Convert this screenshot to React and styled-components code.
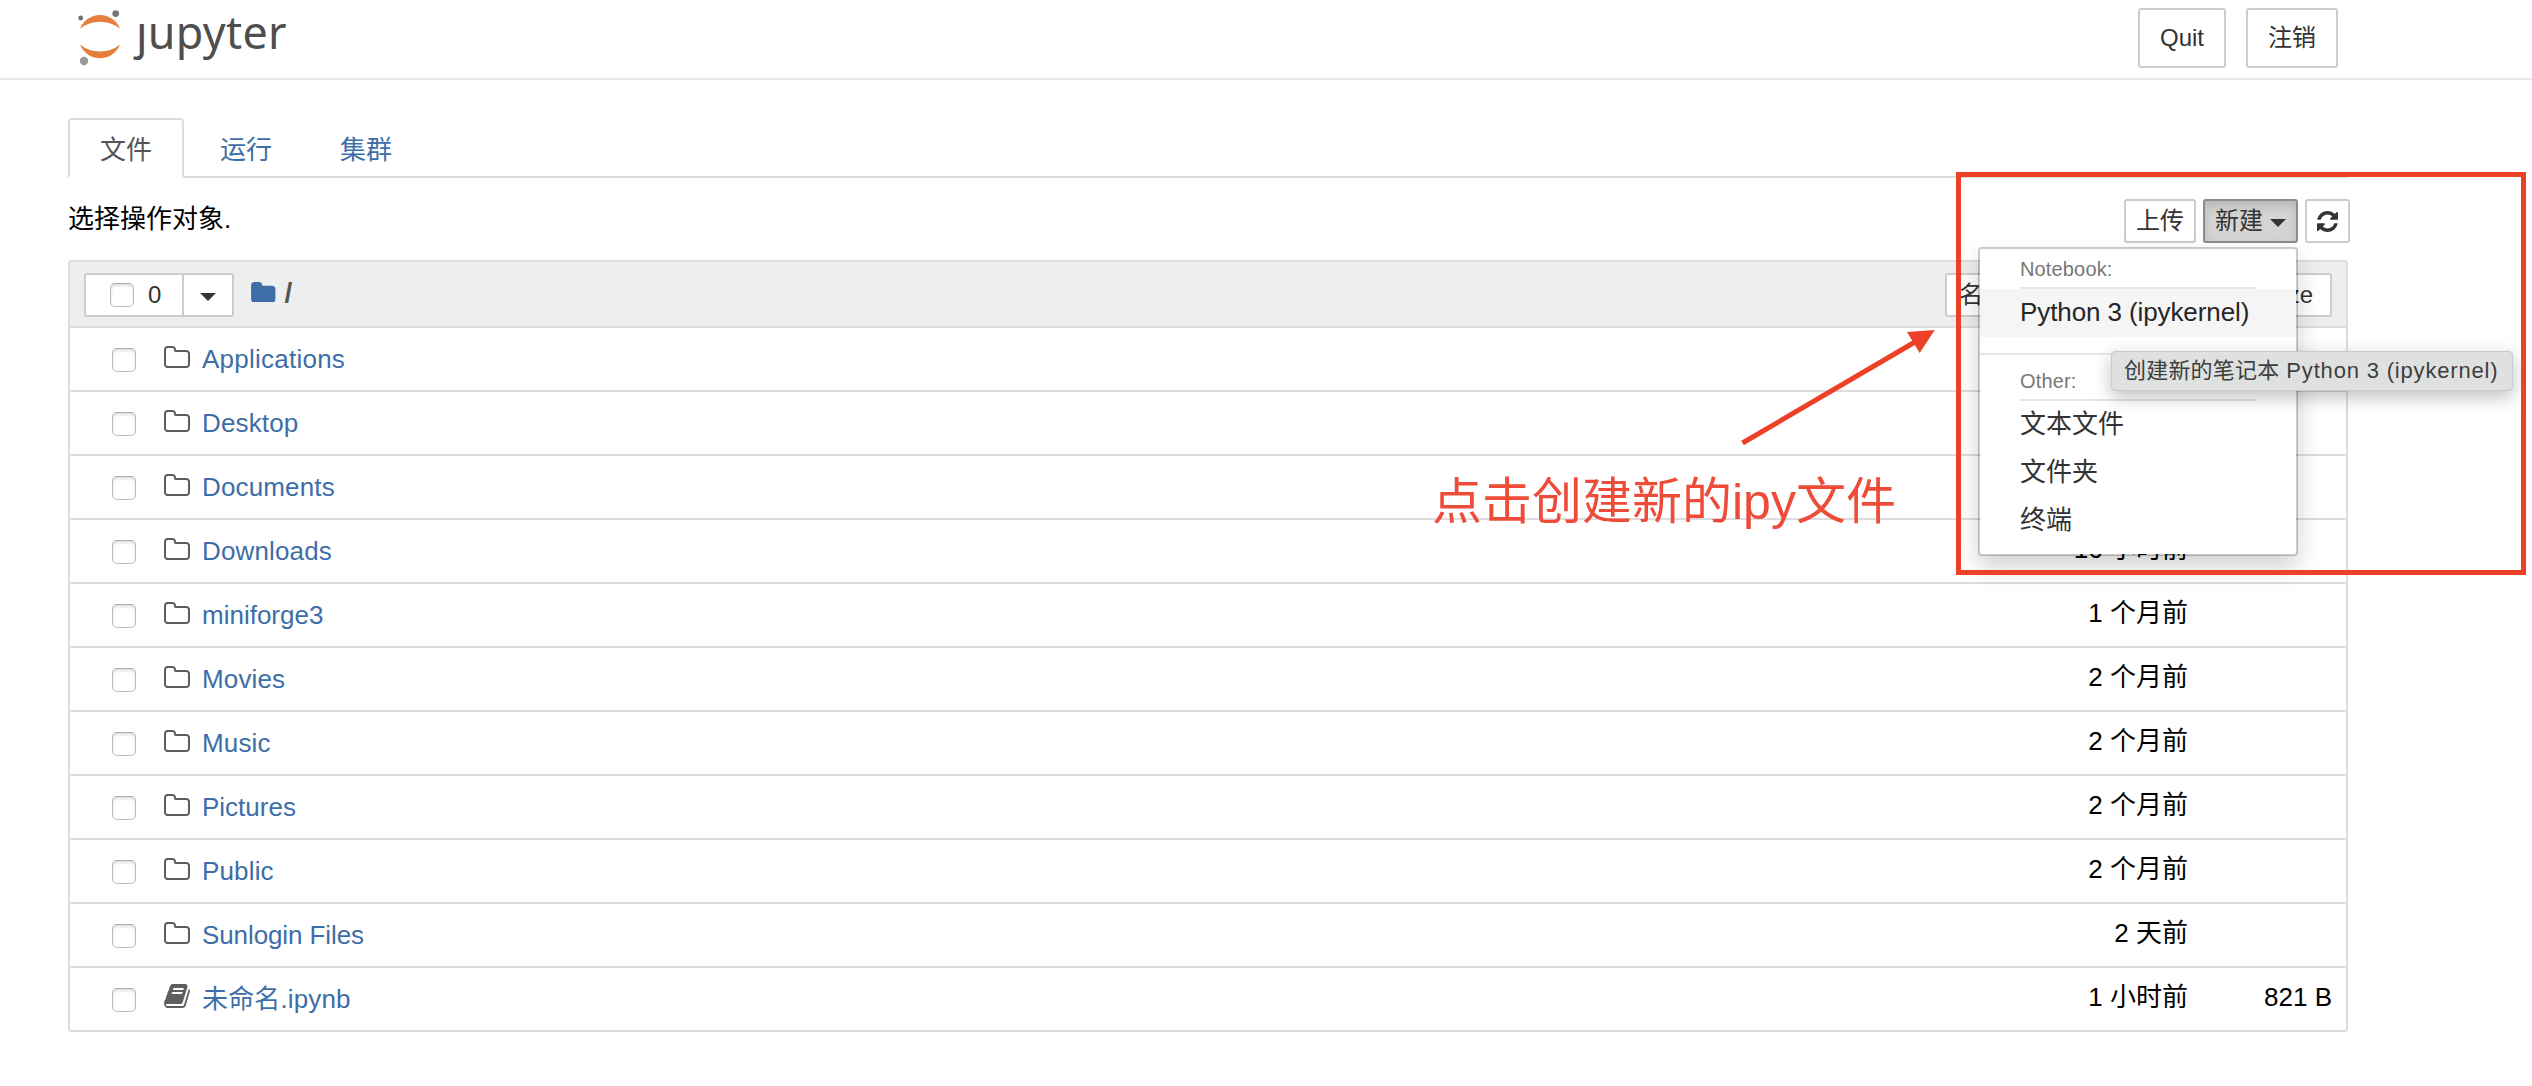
import React from "react";
import styled, { createGlobalStyle } from "styled-components";

const sans = '"Liberation Sans", Arial, "Noto Sans CJK SC", sans-serif';

const GlobalStyle = createGlobalStyle`
  *, *::before, *::after { box-sizing: border-box; }
  body {
    margin: 0;
    background: #fff;
    color: #000;
    font-family: ${sans};
    font-size: 26px;
    line-height: 36px;
  }
  button { font-family: inherit; margin: 0; }
`;

const Page = styled.div`
  position: relative;
  height: 1086px;
  overflow: hidden;
`;

const Header = styled.header`
  height: 80px;
  border-bottom: 2px solid #e7e7e7;
  padding: 8px 194px 0 76px;
  display: flex;
  justify-content: space-between;
  align-items: flex-start;
`;

const Brand = styled.a`
  display: flex;
  align-items: flex-start;
  color: #4e4e4e;
`;

const LogoMark = styled.svg`
  width: 48px;
  height: 60px;
  display: block;
`;

const Wordmark = styled.span`
  display: flex;
  margin: -6px 0 0 12px;
  font-family: "Noto Sans", sans-serif;
  font-size: 44.8px;
  line-height: 60px;
  letter-spacing: 0.3px;
`;

const Stem = styled.span`
  clip-path: inset(22px -4px -10px -20px);
`;

const HeaderActions = styled.div`
  display: flex;
  gap: 20px;
`;

const Button = styled.button`
  display: flex;
  align-items: center;
  justify-content: center;
  height: ${(p) => (p.$large ? 60 : 44)}px;
  padding: 0 ${(p) => p.$pad ?? 10}px;
  border: 2px solid ${(p) => (p.$active ? "#8c8c8c" : "#ccc")};
  border-radius: 3px;
  background: ${(p) => (p.$active ? "#d4d4d4" : "#fff")};
  box-shadow: ${(p) => (p.$active ? "inset 0 6px 10px rgba(0,0,0,.125)" : "none")};
  color: #333;
  font-size: 24px;
  line-height: 36px;
  white-space: nowrap;
`;

const Caret = styled.span`
  width: 16px;
  height: 8px;
  margin: ${(p) => p.$margin ?? "0"};
  background: #333;
  clip-path: polygon(0 0, 100% 0, 50% 100%);
`;

const Container = styled.main`
  width: 2280px;
  margin: 38px 0 0 68px;
`;

const Tabs = styled.nav`
  display: flex;
  gap: 4px;
  height: 60px;
  border-bottom: 2px solid #ddd;
`;

const Tab = styled.a`
  height: 60px;
  padding: 12px 30px 0;
  border: 2px solid ${(p) => (p.$active ? "#ddd" : "transparent")};
  border-bottom-color: ${(p) => (p.$active ? "#fff" : "transparent")};
  border-radius: 4px 4px 0 0;
  color: ${(p) => (p.$active ? "#555" : "#3d6ea8")};
`;

const Toolbar = styled.div`
  display: flex;
  justify-content: space-between;
  height: 82px;
  padding-top: 21px;
`;

const Hint = styled.div`
  line-height: 40px;
`;

const ToolbarActions = styled.div`
  display: flex;
  gap: 7px;
  margin-right: -2px;
`;

const MenuAnchor = styled.div`
  position: relative;
`;

const Menu = styled.div`
  position: absolute;
  top: 48px;
  right: 0;
  z-index: 5;
  width: 320px;
  height: 309px;
  padding-top: 8px;
  background: #fff;
  background-clip: padding-box;
  border: 2px solid rgba(0, 0, 0, 0.2);
  border-radius: 4px;
  box-shadow: 0 12px 24px rgba(0, 0, 0, 0.175);
`;

const MenuHeading = styled.div`
  height: 32px;
  margin: 0 40px;
  border-bottom: 2px solid #e5e5e5;
  color: #777;
  font-size: 20px;
  line-height: 25px;
  letter-spacing: 0.15px;
`;

const MenuItem = styled.div`
  height: 48px;
  padding-left: 40px;
  background: ${(p) => (p.$hover ? "#f5f5f5" : "transparent")};
  color: ${(p) => (p.$hover ? "#262626" : "#333")};
  letter-spacing: ${(p) => (p.$hover ? "-0.1px" : "0")};
  line-height: 46px;
`;

const MenuDivider = styled.div`
  height: 2px;
  margin: 16px 0 14px;
  background: #e5e5e5;
`;

const Tooltip = styled.div`
  position: absolute;
  z-index: 6;
  top: 152px;
  left: -92px;
  width: 402px;
  height: 40px;
  padding-left: 12px;
  background: #dfe1e0;
  border: 1px solid #c9cbca;
  border-radius: 4px;
  box-shadow: 0 6px 18px rgba(0, 0, 0, 0.25);
  color: #3d3f3e;
  font-size: 22px;
  line-height: 38px;
  letter-spacing: 0.2px;
  white-space: nowrap;
`;

const Spaced = styled.span`
  letter-spacing: 0.82px;
`;

const List = styled.section`
  border: 2px solid #ddd;
  border-radius: 4px;
  overflow: hidden;
`;

const ListHeader = styled.div`
  display: flex;
  align-items: flex-start;
  height: 64px;
  padding: 11px 14px 0;
  background: #eee;
`;

const Selector = styled.div`
  display: flex;
  height: 44px;
  width: 150px;
  border: 2px solid #ccc;
  border-radius: 3px;
  background: #fff;
  color: #333;
  font-size: 24px;
`;

const SelectAll = styled.div`
  display: flex;
  align-items: center;
  gap: 14px;
  width: 98px;
  padding-left: 24px;
  border-right: 2px solid #ccc;
`;

const SelectMenu = styled.div`
  flex: 1;
  display: flex;
  align-items: center;
  justify-content: center;
  padding-top: 4px;
`;

const Checkbox = styled.span`
  flex: none;
  width: 24px;
  height: 24px;
  margin-top: ${(p) => p.$top ?? 0}px;
  border: 1px solid #bcbcbc;
  border-top-color: #adadad;
  border-radius: 5px;
  background: #fff;
  box-shadow: inset 0 2px 3px rgba(0, 0, 0, 0.13);
`;

const Crumbs = styled.div`
  display: flex;
  margin-left: 17px;
  padding-top: 1px;
  color: #555;
  gap: 9px;
`;

const CrumbSlash = styled.span`
  font-size: 28px;
  font-weight: bold;
  line-height: 38px;
`;

const SortButtons = styled.div`
  display: flex;
  flex: 1;
  justify-content: flex-end;
`;

const SortGroup = styled.div`
  display: flex;
  justify-content: space-between;
  width: 387px;
`;

const Row = styled.div`
  display: flex;
  height: 64px;
  padding: 0 14px 0 42px;
  border-top: 2px solid #ddd;
`;

const IconSlot = styled.span`
  width: 26px;
  margin: ${(p) => (p.$notebook ? 16 : 18)}px 12px 0 28px;
`;

const Icon = styled.svg`
  display: block;
  width: ${(p) => p.$w}px;
  height: ${(p) => p.$h}px;
  margin-top: ${(p) => p.$top ?? 0}px;
  fill: ${(p) => p.$color};
`;

const FileName = styled.a`
  flex: 1;
  padding-top: 13px;
  color: #3d6ea8;
  letter-spacing: ${(p) => p.$tracking ?? 0.15}px;
`;

const Modified = styled.span`
  padding-top: 11px;
  text-align: right;
`;

const Size = styled.span`
  width: 144px;
  padding-top: 11px;
  text-align: right;
`;

const HighlightFrame = styled.div`
  position: absolute;
  z-index: 8;
  left: 1956px;
  top: 172px;
  width: 570px;
  height: 403px;
  border: 5px solid #ec4126;
`;

const Arrow = styled.svg`
  position: absolute;
  z-index: 8;
  left: 1735px;
  top: 325px;
  width: 205px;
  height: 125px;
`;

const Note = styled.div`
  position: absolute;
  z-index: 8;
  left: 1432px;
  top: 467px;
  color: #ee4c38;
  font-size: 50px;
  line-height: 70px;
  white-space: nowrap;
`;

const FOLDER =
  "M1664 480v704q0 92-66 158t-158 66h-1216q-92 0-158-66t-66-158v-960q0-92 66-158t158-66h320q92 0 158 66t66 158v32h672q92 0 158 66t66 158z";
const FOLDER_OPEN =
  "M1536 1184v-704q0-40-28-68t-68-28h-704q-40 0-68-28t-28-68v-64q0-40-28-68t-68-28h-320q-40 0-68 28t-28 68v960q0 40 28 68t68 28h1216q40 0 68-28t28-68z" +
  FOLDER;
const REFRESH =
  "M1511 928q0 5-1 7-64 268-268 434.5t-478 166.5q-146 0-282.5-55t-243.5-157l-129 129q-19 19-45 19t-45-19-19-45v-448q0-26 19-45t45-19h448q26 0 45 19t19 45-19 45l-137 137q71 66 161 102t187 36q134 0 250-65t186-179q11-17 53-117 8-23 30-23h192q13 0 22.5 9.5t9.5 22.5zM1536 128v448q0 26-19 45t-45 19h-448q-26 0-45-19t-19-45 19-45l138-138q-148-137-349-137-134 0-250 65t-186 179q-11 17-53 117-8 23-30 23h-199q-13 0-22.5-9.5t-9.5-22.5v-7q65-268 270-434.5t480-166.5q146 0 284 55.5t245 156.5l130-129q19-19 45-19t45 19 19 45z";
const BOOK =
  "M1639 478q40 57 18 129l-275 906q-19 64-76.5 107.5t-122.5 43.5h-923q-77 0-148.5-53.5t-99.5-131.5q-24-67-2-127 0-4 3-27t4-37q1-8-3-21.5t-3-19.5q2-11 8-21t16.5-23.5 16.5-23.5q23-38 45-91.5t30-91.5q3-10 .5-30t-.5-28q3-11 17-28t17-23q21-36 42-92t25-90q1-9-2.5-32t.5-28q4-13 22-30.5t22-22.5q19-26 42.5-84.5t27.5-96.5q1-8-3-25.5t-2-26.5q2-8 9-18t18-23 17-21q8-12 16.5-30.5t15-35 16-36 19.5-32 26.5-23.5 36-11.5 47.5 5.5l-1 3q38-9 51-9h761q74 0 114 56t18 130l-274 906q-36 119-71.5 153.5t-128.5 34.5h-869q-27 0-38 15-11 16-1 43 24 70 144 70h923q29 0 56-15.5t35-41.5l300-987q7-22 5-57 38 15 59 43zM575 480q-4 13 2 22.5t20 9.5h608q13 0 25.5-9.5t16.5-22.5l21-64q4-13-2-22.5t-20-9.5h-608q-13 0-25.5 9.5t-16.5 22.5zM492 736q-4 13 2 22.5t20 9.5h608q13 0 25.5-9.5t16.5-22.5l21-64q4-13-2-22.5t-20-9.5h-608q-13 0-25.5 9.5t-16.5 22.5z";

const files = [
  { name: "Applications", tracking: 0.24 },
  { name: "Desktop" },
  { name: "Documents" },
  { name: "Downloads", modified: "16 小时前" },
  { name: "miniforge3", modified: "1 个月前", tracking: 0 },
  { name: "Movies", modified: "2 个月前" },
  { name: "Music", modified: "2 个月前" },
  { name: "Pictures", modified: "2 个月前", tracking: 0 },
  { name: "Public", modified: "2 个月前" },
  { name: "Sunlogin Files", modified: "2 天前", tracking: -0.1 },
  { name: "未命名.ipynb", modified: "1 小时前", size: "821 B", notebook: true },
];

function FileRow({ name, modified, size, notebook, tracking }) {
  return (
    <Row>
      <Checkbox $top={20} />
      <IconSlot $notebook={notebook}>
        {notebook ? (
          <Icon $w={26} $h={24} $color="#5e5e5e" viewBox="0 128 1664 1536">
            <path d={BOOK} />
          </Icon>
        ) : (
          <Icon $w={26} $h={22} $color="#5e5e5e" viewBox="0 0 1664 1408">
            <path fillRule="evenodd" d={FOLDER_OPEN} />
          </Icon>
        )}
      </IconSlot>
      <FileName $tracking={tracking}>{name}</FileName>
      <Modified>{modified}</Modified>
      <Size>{size}</Size>
    </Row>
  );
}

export default function App() {
  return (
    <Page>
      <GlobalStyle />
      <Header>
        <Brand>
          <LogoMark viewBox="76 8 48 60">
            <path fill="#e47f3d" d="M80 28.8A21.4 21.4 0 0 1 120 28.8A32 32 0 0 0 80 28.8Z" />
            <path fill="#e47f3d" d="M80 44.4A21.4 21.4 0 0 0 120 44.4A32 32 0 0 1 80 44.4Z" />
            <circle cx="80.7" cy="18" r="2.4" fill="#6f6f70" />
            <circle cx="115.7" cy="13.6" r="3.4" fill="#767677" />
            <circle cx="84" cy="61" r="4.2" fill="#9a9a9a" />
          </LogoMark>
          <Wordmark>
            <Stem>j</Stem>upyter
          </Wordmark>
        </Brand>
        <HeaderActions>
          <Button $large $pad={20}>Quit</Button>
          <Button $large $pad={20}>注销</Button>
        </HeaderActions>
      </Header>

      <Container>
        <Tabs>
          <Tab $active>文件</Tab>
          <Tab>运行</Tab>
          <Tab>集群</Tab>
        </Tabs>

        <Toolbar>
          <Hint>选择操作对象.</Hint>
          <ToolbarActions>
            <Button>上传</Button>
            <MenuAnchor>
              <Button $active>
                新建
                <Caret $margin="4px 0 0 7px" />
              </Button>
              <Menu>
                <MenuHeading>Notebook:</MenuHeading>
                <MenuItem $hover>Python 3 (ipykernel)</MenuItem>
                <MenuDivider />
                <MenuHeading>Other:</MenuHeading>
                <MenuItem>文本文件</MenuItem>
                <MenuItem>文件夹</MenuItem>
                <MenuItem>终端</MenuItem>
              </Menu>
              <Tooltip>
                创建新的笔记本<Spaced> Python 3 (ipykernel)</Spaced>
              </Tooltip>
            </MenuAnchor>
            <Button>
              <Icon $w={21} $h={21} $color="#333" viewBox="0 0 1536 1536">
                <path d={REFRESH} />
              </Icon>
            </Button>
          </ToolbarActions>
        </Toolbar>

        <List>
          <ListHeader>
            <Selector>
              <SelectAll>
                <Checkbox />0
              </SelectAll>
              <SelectMenu>
                <Caret />
              </SelectMenu>
            </Selector>
            <Crumbs>
              <Icon $w={24.5} $h={20.6} $top={7.5} $color="#3d6ea8" viewBox="0 0 1664 1408">
                <path d={FOLDER} />
              </Icon>
              <CrumbSlash>/</CrumbSlash>
            </Crumbs>
            <SortButtons>
              <SortGroup>
                <Button $pad={12}>名字</Button>
                <Button $pad={17}>File size</Button>
              </SortGroup>
            </SortButtons>
          </ListHeader>
          {files.map((file) => (
            <FileRow key={file.name} {...file} />
          ))}
        </List>
      </Container>

      <Arrow viewBox="1735 325 205 125">
        <path d="M1742.5 443L1915 342" stroke="#ec4126" strokeWidth="5" />
        <path d="M1934.7 330L1907 332L1919.7 353Z" fill="#ec4126" />
      </Arrow>
      <Note>点击创建新的ipy文件</Note>
      <HighlightFrame />
    </Page>
  );
}
